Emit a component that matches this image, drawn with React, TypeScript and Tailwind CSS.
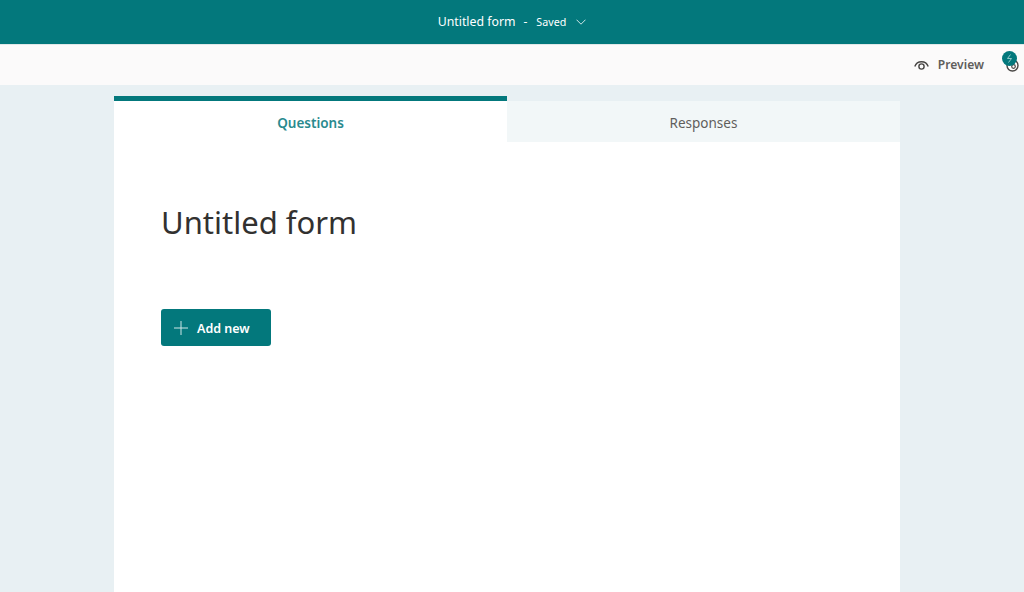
import React from 'react';

const font = "font-['Noto_Sans','Open_Sans',sans-serif]";

const Chevron = () => (
  <svg width="10" height="6" viewBox="0 0 10 6" fill="none" stroke="#cfe6e6" strokeWidth="1">
    <path d="M0.5 0.7 L5 5.2 L9.5 0.7" />
  </svg>
);

const Eye = () => (
  <svg width="15" height="11" viewBox="0 0 15 11" fill="none" stroke="#484644" strokeWidth="1.4">
    <path d="M0.8 6.5 C3 0.2 12 0.2 14.2 6.5" />
    <circle cx="7.5" cy="6.5" r="2.6" />
  </svg>
);

const Badge = () => (
  <div className="relative w-[18px] h-[21px]">
    <svg className="absolute left-[4px] top-[8px]" width="13" height="13" viewBox="0 0 13 13" fill="none">
      <circle cx="6.5" cy="6.5" r="5.5" fill="#fff" stroke="#484644" strokeWidth="1.4" />
      <circle cx="7.5" cy="7.5" r="1.8" stroke="#484644" strokeWidth="1.2" />
    </svg>
    <div className="absolute left-0 top-0 w-[15px] h-[15px] rounded-full bg-[#03787c] flex items-center justify-center">
      <svg width="7" height="9" viewBox="0 0 7 9" fill="none" stroke="#9fd0d0" strokeWidth="0.9">
        <path d="M4.5 0.5 L1.5 4.5 H5.5 L2.5 8.5" />
      </svg>
    </div>
  </div>
);

const App: React.FC = () => (
  <div className={`${font} w-[1024px] h-[592px] overflow-hidden flex flex-col bg-[#e8f0f3]`}>
    <header className="h-[44px] shrink-0 bg-[#03787c] flex items-center justify-center text-white">
      <span className="text-[12.3px]">Untitled form</span>
      <span className="text-[12px] ml-[8px]">-</span>
      <span className="text-[10.7px] ml-[9px]">Saved</span>
      <span className="ml-[10px] flex"><Chevron /></span>
    </header>
    <div className="h-[41px] shrink-0 bg-[#fbfafa] border-t border-[#e1e8e8] flex items-center justify-end pr-[4px]">
      <Eye />
      <span className="ml-[9px] mr-[18px] text-[12.1px] font-semibold text-[#605e5c]">Preview</span>
      <div className="mb-[7px]"><Badge /></div>
    </div>
    <main className="flex-1 w-[786px] ml-[114px] mt-[11px] flex flex-col">
      <div className="flex h-[46px] shrink-0">
        <div className="w-[393px] bg-white border-t-[5px] border-[#03787c] flex items-center justify-center text-[13.5px] font-semibold text-[#2a8a8e] pt-[4px]">
          Questions
        </div>
        <div className="flex-1 mt-[5px] bg-[#f2f7f8] flex items-center justify-center text-[13.5px] text-[#605e5c] pt-[4px]">
          Responses
        </div>
      </div>
      <div className="flex-1 bg-white px-[47px] pt-[56px]">
        <h1 className="text-[31px] leading-[48px] text-[#323130]">Untitled form</h1>
        <button className="mt-[63px] w-[110px] h-[37px] rounded-[3px] bg-[#03787c] flex items-center pl-[13px] text-white">
          <svg width="14" height="14" viewBox="0 0 14 14" stroke="#cfe6e6" strokeWidth="1" fill="none">
            <path d="M7 0 V14 M0 7 H14" />
          </svg>
          <span className="ml-[9px] pt-[3px] text-[12.5px] font-semibold">Add new</span>
        </button>
      </div>
    </main>
  </div>
);

export default App;
